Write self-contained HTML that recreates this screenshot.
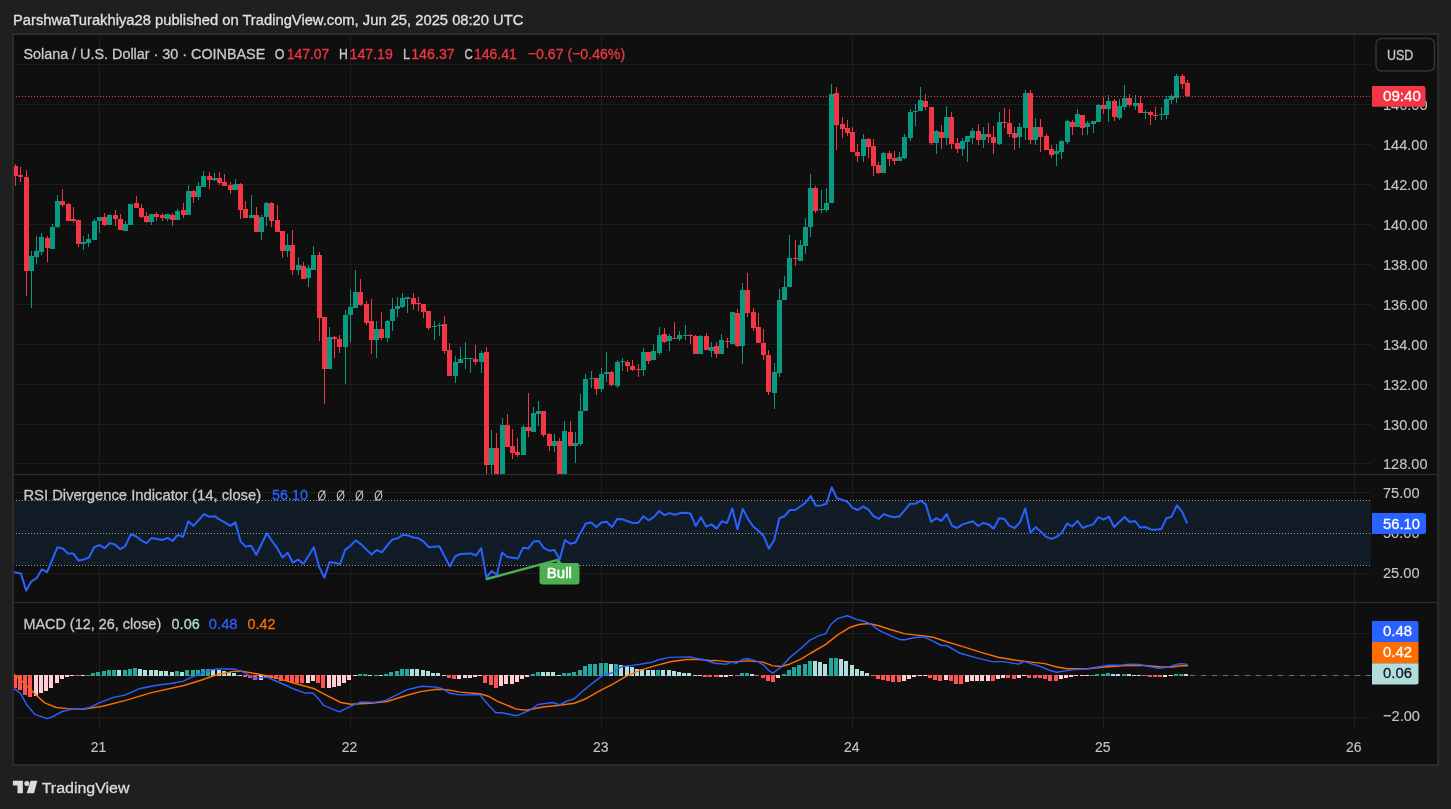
<!DOCTYPE html>
<html><head><meta charset="utf-8"><style>
svg{will-change:transform;}
html,body{margin:0;padding:0;width:1451px;height:809px;overflow:hidden;background:#1f1f1f;}
</style></head><body>
<svg width="1451" height="809" viewBox="0 0 1451 809" style="position:absolute;left:0;top:0;font-family:'Liberation Sans', sans-serif">
<defs>
<clipPath id="cp"><rect x="14" y="35" width="1357" height="439"/></clipPath>
<clipPath id="cr"><rect x="14" y="475" width="1357" height="127"/></clipPath>
<clipPath id="cm"><rect x="14" y="603" width="1357" height="126"/></clipPath>
</defs>
<rect x="0" y="0" width="1451" height="809" fill="#1f1f1f"/>
<rect x="12" y="33" width="1427" height="733" fill="#2b2b2b"/>
<rect x="14" y="35" width="1423" height="729" fill="#0f0f0f"/>
<line x1="99.5" y1="35" x2="99.5" y2="729" stroke="#1e1e1e" stroke-width="1"/>
<line x1="350.5" y1="35" x2="350.5" y2="729" stroke="#1e1e1e" stroke-width="1"/>
<line x1="601.5" y1="35" x2="601.5" y2="729" stroke="#1e1e1e" stroke-width="1"/>
<line x1="852.5" y1="35" x2="852.5" y2="729" stroke="#1e1e1e" stroke-width="1"/>
<line x1="1103.5" y1="35" x2="1103.5" y2="729" stroke="#1e1e1e" stroke-width="1"/>
<line x1="1354.5" y1="35" x2="1354.5" y2="729" stroke="#1e1e1e" stroke-width="1"/>
<line x1="14" y1="64.5" x2="1371" y2="64.5" stroke="#1e1e1e" stroke-width="1"/>
<line x1="14" y1="104.5" x2="1371" y2="104.5" stroke="#1e1e1e" stroke-width="1"/>
<line x1="14" y1="144.5" x2="1371" y2="144.5" stroke="#1e1e1e" stroke-width="1"/>
<line x1="14" y1="184.5" x2="1371" y2="184.5" stroke="#1e1e1e" stroke-width="1"/>
<line x1="14" y1="224.5" x2="1371" y2="224.5" stroke="#1e1e1e" stroke-width="1"/>
<line x1="14" y1="264.5" x2="1371" y2="264.5" stroke="#1e1e1e" stroke-width="1"/>
<line x1="14" y1="304.5" x2="1371" y2="304.5" stroke="#1e1e1e" stroke-width="1"/>
<line x1="14" y1="344.5" x2="1371" y2="344.5" stroke="#1e1e1e" stroke-width="1"/>
<line x1="14" y1="384.5" x2="1371" y2="384.5" stroke="#1e1e1e" stroke-width="1"/>
<line x1="14" y1="424.5" x2="1371" y2="424.5" stroke="#1e1e1e" stroke-width="1"/>
<line x1="14" y1="463.5" x2="1371" y2="463.5" stroke="#1e1e1e" stroke-width="1"/>
<line x1="14" y1="492.5" x2="1371" y2="492.5" stroke="#1e1e1e" stroke-width="1"/>
<line x1="14" y1="533.5" x2="1371" y2="533.5" stroke="#1e1e1e" stroke-width="1"/>
<line x1="14" y1="573.5" x2="1371" y2="573.5" stroke="#1e1e1e" stroke-width="1"/>
<line x1="14" y1="633.5" x2="1371" y2="633.5" stroke="#1e1e1e" stroke-width="1"/>
<line x1="14" y1="717.5" x2="1371" y2="717.5" stroke="#1e1e1e" stroke-width="1"/>
<line x1="14" y1="474.5" x2="1437" y2="474.5" stroke="#2e2e2e" stroke-width="1"/>
<line x1="14" y1="602.5" x2="1437" y2="602.5" stroke="#2e2e2e" stroke-width="1"/>
<g clip-path="url(#cp)" shape-rendering="crispEdges">
<rect x="15" y="164.0" width="1" height="21.7" fill="#f23645"/>
<rect x="13" y="165.9" width="5" height="9.9" fill="#f23645"/>
<rect x="20" y="167.0" width="1" height="14.7" fill="#f23645"/>
<rect x="18" y="175.4" width="5" height="1.2" fill="#f23645"/>
<rect x="26" y="169.9" width="1" height="126.5" fill="#f23645"/>
<rect x="24" y="176.8" width="5" height="93.9" fill="#f23645"/>
<rect x="31" y="250.9" width="1" height="57.3" fill="#089981"/>
<rect x="29" y="255.8" width="5" height="14.9" fill="#089981"/>
<rect x="36" y="236.0" width="1" height="27.8" fill="#089981"/>
<rect x="34" y="250.9" width="5" height="5.9" fill="#089981"/>
<rect x="41" y="233.0" width="1" height="21.9" fill="#089981"/>
<rect x="39" y="237.0" width="5" height="14.9" fill="#089981"/>
<rect x="47" y="236.0" width="1" height="25.8" fill="#f23645"/>
<rect x="45" y="238.0" width="5" height="10.0" fill="#f23645"/>
<rect x="52" y="224.2" width="1" height="24.7" fill="#089981"/>
<rect x="50" y="227.2" width="5" height="21.7" fill="#089981"/>
<rect x="57" y="195.2" width="1" height="33.0" fill="#089981"/>
<rect x="55" y="200.5" width="5" height="26.7" fill="#089981"/>
<rect x="62" y="189.2" width="1" height="17.8" fill="#f23645"/>
<rect x="60" y="201.1" width="5" height="3.9" fill="#f23645"/>
<rect x="68" y="203.0" width="1" height="17.9" fill="#f23645"/>
<rect x="66" y="203.9" width="5" height="17.0" fill="#f23645"/>
<rect x="73" y="207.0" width="1" height="15.8" fill="#f23645"/>
<rect x="71" y="219.3" width="5" height="2.0" fill="#f23645"/>
<rect x="78" y="219.9" width="1" height="27.1" fill="#f23645"/>
<rect x="76" y="219.9" width="5" height="24.1" fill="#f23645"/>
<rect x="83" y="236.0" width="1" height="14.0" fill="#089981"/>
<rect x="81" y="242.0" width="5" height="2.0" fill="#089981"/>
<rect x="88" y="234.0" width="1" height="13.0" fill="#089981"/>
<rect x="86" y="238.7" width="5" height="4.3" fill="#089981"/>
<rect x="94" y="219.3" width="1" height="20.7" fill="#089981"/>
<rect x="92" y="220.9" width="5" height="19.1" fill="#089981"/>
<rect x="99" y="217.3" width="1" height="15.7" fill="#089981"/>
<rect x="97" y="217.3" width="5" height="4.0" fill="#089981"/>
<rect x="104" y="213.0" width="1" height="13.2" fill="#f23645"/>
<rect x="102" y="217.3" width="5" height="7.9" fill="#f23645"/>
<rect x="109" y="213.8" width="1" height="11.0" fill="#089981"/>
<rect x="107" y="215.0" width="5" height="9.8" fill="#089981"/>
<rect x="115" y="209.8" width="1" height="16.4" fill="#f23645"/>
<rect x="113" y="215.3" width="5" height="4.0" fill="#f23645"/>
<rect x="120" y="213.8" width="1" height="15.8" fill="#f23645"/>
<rect x="118" y="218.9" width="5" height="10.7" fill="#f23645"/>
<rect x="125" y="220.9" width="1" height="9.9" fill="#089981"/>
<rect x="123" y="224.2" width="5" height="6.6" fill="#089981"/>
<rect x="130" y="203.9" width="1" height="20.9" fill="#089981"/>
<rect x="128" y="203.9" width="5" height="20.9" fill="#089981"/>
<rect x="136" y="196.0" width="1" height="12.4" fill="#f23645"/>
<rect x="134" y="203.0" width="5" height="5.4" fill="#f23645"/>
<rect x="141" y="203.9" width="1" height="14.4" fill="#f23645"/>
<rect x="139" y="207.8" width="5" height="9.5" fill="#f23645"/>
<rect x="146" y="211.8" width="1" height="11.0" fill="#f23645"/>
<rect x="144" y="216.3" width="5" height="6.0" fill="#f23645"/>
<rect x="151" y="213.8" width="1" height="11.0" fill="#089981"/>
<rect x="149" y="213.8" width="5" height="7.9" fill="#089981"/>
<rect x="156" y="212.4" width="1" height="8.5" fill="#f23645"/>
<rect x="154" y="213.8" width="5" height="3.1" fill="#f23645"/>
<rect x="162" y="213.0" width="1" height="7.9" fill="#f23645"/>
<rect x="160" y="215.0" width="5" height="2.7" fill="#f23645"/>
<rect x="167" y="213.8" width="1" height="7.1" fill="#089981"/>
<rect x="165" y="213.8" width="5" height="5.1" fill="#089981"/>
<rect x="172" y="213.0" width="1" height="12.6" fill="#f23645"/>
<rect x="170" y="215.3" width="5" height="4.4" fill="#f23645"/>
<rect x="177" y="209.0" width="1" height="10.7" fill="#089981"/>
<rect x="175" y="211.0" width="5" height="8.7" fill="#089981"/>
<rect x="183" y="203.0" width="1" height="14.7" fill="#f23645"/>
<rect x="181" y="210.4" width="5" height="4.6" fill="#f23645"/>
<rect x="188" y="185.3" width="1" height="29.7" fill="#089981"/>
<rect x="186" y="191.2" width="5" height="23.8" fill="#089981"/>
<rect x="193" y="190.0" width="1" height="12.5" fill="#f23645"/>
<rect x="191" y="191.2" width="5" height="6.0" fill="#f23645"/>
<rect x="198" y="182.1" width="1" height="17.4" fill="#089981"/>
<rect x="196" y="186.1" width="5" height="11.1" fill="#089981"/>
<rect x="203" y="170.9" width="1" height="15.8" fill="#089981"/>
<rect x="201" y="176.2" width="5" height="10.5" fill="#089981"/>
<rect x="209" y="172.3" width="1" height="16.4" fill="#f23645"/>
<rect x="207" y="176.2" width="5" height="3.6" fill="#f23645"/>
<rect x="214" y="173.4" width="1" height="7.4" fill="#089981"/>
<rect x="212" y="177.8" width="5" height="2.4" fill="#089981"/>
<rect x="219" y="172.3" width="1" height="12.4" fill="#f23645"/>
<rect x="217" y="178.2" width="5" height="4.5" fill="#f23645"/>
<rect x="224" y="174.2" width="1" height="11.9" fill="#f23645"/>
<rect x="222" y="182.1" width="5" height="3.6" fill="#f23645"/>
<rect x="230" y="182.1" width="1" height="11.5" fill="#f23645"/>
<rect x="228" y="185.3" width="5" height="4.3" fill="#f23645"/>
<rect x="235" y="179.4" width="1" height="10.2" fill="#089981"/>
<rect x="233" y="184.1" width="5" height="5.5" fill="#089981"/>
<rect x="240" y="183.3" width="1" height="35.6" fill="#f23645"/>
<rect x="238" y="184.1" width="5" height="25.9" fill="#f23645"/>
<rect x="245" y="200.6" width="1" height="17.8" fill="#f23645"/>
<rect x="243" y="209.1" width="5" height="8.7" fill="#f23645"/>
<rect x="251" y="195.3" width="1" height="22.5" fill="#089981"/>
<rect x="249" y="215.0" width="5" height="2.8" fill="#089981"/>
<rect x="256" y="207.2" width="1" height="24.5" fill="#f23645"/>
<rect x="254" y="215.0" width="5" height="16.7" fill="#f23645"/>
<rect x="261" y="215.0" width="1" height="24.6" fill="#089981"/>
<rect x="259" y="217.0" width="5" height="14.7" fill="#089981"/>
<rect x="266" y="201.6" width="1" height="24.1" fill="#089981"/>
<rect x="264" y="202.6" width="5" height="14.8" fill="#089981"/>
<rect x="271" y="201.6" width="1" height="25.3" fill="#f23645"/>
<rect x="269" y="202.6" width="5" height="18.4" fill="#f23645"/>
<rect x="277" y="205.2" width="1" height="26.5" fill="#f23645"/>
<rect x="275" y="219.8" width="5" height="11.9" fill="#f23645"/>
<rect x="282" y="231.3" width="1" height="26.7" fill="#f23645"/>
<rect x="280" y="231.3" width="5" height="19.3" fill="#f23645"/>
<rect x="287" y="233.6" width="1" height="23.4" fill="#089981"/>
<rect x="285" y="245.1" width="5" height="5.5" fill="#089981"/>
<rect x="292" y="229.7" width="1" height="45.0" fill="#f23645"/>
<rect x="290" y="245.1" width="5" height="24.7" fill="#f23645"/>
<rect x="298" y="257.0" width="1" height="17.7" fill="#089981"/>
<rect x="296" y="265.3" width="5" height="4.5" fill="#089981"/>
<rect x="303" y="261.9" width="1" height="16.8" fill="#f23645"/>
<rect x="301" y="265.8" width="5" height="12.9" fill="#f23645"/>
<rect x="308" y="264.5" width="1" height="22.1" fill="#089981"/>
<rect x="306" y="267.8" width="5" height="9.9" fill="#089981"/>
<rect x="313" y="246.0" width="1" height="23.8" fill="#089981"/>
<rect x="311" y="255.0" width="5" height="14.8" fill="#089981"/>
<rect x="319" y="252.4" width="1" height="88.6" fill="#f23645"/>
<rect x="317" y="255.0" width="5" height="62.6" fill="#f23645"/>
<rect x="324" y="317.2" width="1" height="86.6" fill="#f23645"/>
<rect x="322" y="317.2" width="5" height="51.4" fill="#f23645"/>
<rect x="329" y="327.0" width="1" height="41.6" fill="#089981"/>
<rect x="327" y="337.0" width="5" height="31.6" fill="#089981"/>
<rect x="334" y="336.0" width="1" height="21.7" fill="#f23645"/>
<rect x="332" y="337.0" width="5" height="2.3" fill="#f23645"/>
<rect x="339" y="335.0" width="1" height="17.8" fill="#f23645"/>
<rect x="337" y="339.0" width="5" height="7.8" fill="#f23645"/>
<rect x="345" y="310.3" width="1" height="73.7" fill="#089981"/>
<rect x="343" y="314.8" width="5" height="32.0" fill="#089981"/>
<rect x="350" y="290.0" width="1" height="51.9" fill="#089981"/>
<rect x="348" y="307.3" width="5" height="7.5" fill="#089981"/>
<rect x="355" y="269.8" width="1" height="37.9" fill="#089981"/>
<rect x="353" y="291.9" width="5" height="15.8" fill="#089981"/>
<rect x="360" y="279.2" width="1" height="27.1" fill="#f23645"/>
<rect x="358" y="291.9" width="5" height="13.1" fill="#f23645"/>
<rect x="366" y="301.0" width="1" height="23.7" fill="#f23645"/>
<rect x="364" y="303.8" width="5" height="19.3" fill="#f23645"/>
<rect x="371" y="299.0" width="1" height="54.8" fill="#f23645"/>
<rect x="369" y="320.8" width="5" height="19.2" fill="#f23645"/>
<rect x="376" y="321.0" width="1" height="37.3" fill="#089981"/>
<rect x="374" y="329.0" width="5" height="11.0" fill="#089981"/>
<rect x="381" y="312.3" width="1" height="27.7" fill="#f23645"/>
<rect x="379" y="329.0" width="5" height="9.0" fill="#f23645"/>
<rect x="387" y="320.0" width="1" height="21.9" fill="#089981"/>
<rect x="385" y="320.8" width="5" height="17.2" fill="#089981"/>
<rect x="392" y="297.8" width="1" height="32.8" fill="#089981"/>
<rect x="390" y="308.9" width="5" height="11.9" fill="#089981"/>
<rect x="397" y="297.0" width="1" height="19.8" fill="#089981"/>
<rect x="395" y="306.3" width="5" height="3.0" fill="#089981"/>
<rect x="402" y="293.0" width="1" height="14.7" fill="#089981"/>
<rect x="400" y="297.8" width="5" height="9.1" fill="#089981"/>
<rect x="407" y="297.0" width="1" height="15.8" fill="#089981"/>
<rect x="405" y="297.4" width="5" height="1.6" fill="#089981"/>
<rect x="413" y="293.0" width="1" height="16.7" fill="#f23645"/>
<rect x="411" y="297.8" width="5" height="6.0" fill="#f23645"/>
<rect x="418" y="297.4" width="1" height="13.5" fill="#f23645"/>
<rect x="416" y="302.7" width="5" height="1.0" fill="#f23645"/>
<rect x="423" y="304.2" width="1" height="14.1" fill="#f23645"/>
<rect x="421" y="304.2" width="5" height="7.4" fill="#f23645"/>
<rect x="428" y="310.9" width="1" height="19.1" fill="#f23645"/>
<rect x="426" y="310.9" width="5" height="17.3" fill="#f23645"/>
<rect x="434" y="320.8" width="1" height="19.0" fill="#089981"/>
<rect x="432" y="326.0" width="5" height="1.0" fill="#089981"/>
<rect x="439" y="322.5" width="1" height="13.1" fill="#089981"/>
<rect x="437" y="324.5" width="5" height="1.0" fill="#089981"/>
<rect x="444" y="315.8" width="1" height="38.4" fill="#f23645"/>
<rect x="442" y="324.0" width="5" height="26.5" fill="#f23645"/>
<rect x="449" y="343.0" width="1" height="33.4" fill="#f23645"/>
<rect x="447" y="349.7" width="5" height="26.7" fill="#f23645"/>
<rect x="455" y="356.1" width="1" height="26.5" fill="#089981"/>
<rect x="453" y="362.0" width="5" height="14.4" fill="#089981"/>
<rect x="460" y="346.7" width="1" height="16.1" fill="#089981"/>
<rect x="458" y="359.1" width="5" height="3.7" fill="#089981"/>
<rect x="465" y="341.8" width="1" height="26.7" fill="#089981"/>
<rect x="463" y="358.0" width="5" height="1.0" fill="#089981"/>
<rect x="470" y="357.9" width="1" height="14.8" fill="#089981"/>
<rect x="468" y="358.0" width="5" height="1.0" fill="#089981"/>
<rect x="475" y="344.8" width="1" height="19.7" fill="#f23645"/>
<rect x="473" y="358.6" width="5" height="3.4" fill="#f23645"/>
<rect x="481" y="351.2" width="1" height="21.5" fill="#089981"/>
<rect x="479" y="352.9" width="5" height="9.1" fill="#089981"/>
<rect x="486" y="346.7" width="1" height="133.3" fill="#f23645"/>
<rect x="484" y="352.2" width="5" height="112.8" fill="#f23645"/>
<rect x="491" y="430.0" width="1" height="50.0" fill="#089981"/>
<rect x="489" y="448.0" width="5" height="17.0" fill="#089981"/>
<rect x="496" y="433.2" width="1" height="46.8" fill="#f23645"/>
<rect x="494" y="448.0" width="5" height="32.0" fill="#f23645"/>
<rect x="502" y="418.0" width="1" height="62.0" fill="#089981"/>
<rect x="500" y="425.1" width="5" height="54.9" fill="#089981"/>
<rect x="507" y="414.0" width="1" height="33.0" fill="#f23645"/>
<rect x="505" y="425.1" width="5" height="21.9" fill="#f23645"/>
<rect x="512" y="429.2" width="1" height="29.7" fill="#f23645"/>
<rect x="510" y="446.1" width="5" height="6.9" fill="#f23645"/>
<rect x="517" y="437.8" width="1" height="19.1" fill="#f23645"/>
<rect x="515" y="452.3" width="5" height="2.5" fill="#f23645"/>
<rect x="523" y="425.1" width="1" height="29.7" fill="#089981"/>
<rect x="521" y="427.0" width="5" height="27.8" fill="#089981"/>
<rect x="528" y="393.0" width="1" height="43.9" fill="#f23645"/>
<rect x="526" y="427.0" width="5" height="3.9" fill="#f23645"/>
<rect x="533" y="407.0" width="1" height="25.0" fill="#089981"/>
<rect x="531" y="413.1" width="5" height="18.9" fill="#089981"/>
<rect x="538" y="401.0" width="1" height="25.0" fill="#089981"/>
<rect x="536" y="411.1" width="5" height="2.5" fill="#089981"/>
<rect x="543" y="411.1" width="1" height="25.8" fill="#f23645"/>
<rect x="541" y="411.1" width="5" height="23.9" fill="#f23645"/>
<rect x="549" y="433.2" width="1" height="17.8" fill="#f23645"/>
<rect x="547" y="434.1" width="5" height="11.7" fill="#f23645"/>
<rect x="554" y="434.1" width="1" height="17.9" fill="#089981"/>
<rect x="552" y="441.2" width="5" height="4.6" fill="#089981"/>
<rect x="559" y="438.1" width="1" height="41.9" fill="#f23645"/>
<rect x="557" y="440.8" width="5" height="39.2" fill="#f23645"/>
<rect x="564" y="421.0" width="1" height="59.0" fill="#089981"/>
<rect x="562" y="431.0" width="5" height="49.0" fill="#089981"/>
<rect x="570" y="421.0" width="1" height="24.8" fill="#f23645"/>
<rect x="568" y="432.0" width="5" height="13.8" fill="#f23645"/>
<rect x="575" y="432.0" width="1" height="30.8" fill="#089981"/>
<rect x="573" y="443.3" width="5" height="2.5" fill="#089981"/>
<rect x="580" y="394.2" width="1" height="51.9" fill="#089981"/>
<rect x="578" y="411.1" width="5" height="32.6" fill="#089981"/>
<rect x="585" y="374.3" width="1" height="36.9" fill="#089981"/>
<rect x="583" y="378.8" width="5" height="32.4" fill="#089981"/>
<rect x="591" y="371.3" width="1" height="16.8" fill="#089981"/>
<rect x="589" y="377.8" width="5" height="1.0" fill="#089981"/>
<rect x="596" y="378.2" width="1" height="16.4" fill="#f23645"/>
<rect x="594" y="378.2" width="5" height="10.5" fill="#f23645"/>
<rect x="601" y="367.8" width="1" height="23.7" fill="#089981"/>
<rect x="599" y="373.7" width="5" height="15.0" fill="#089981"/>
<rect x="606" y="352.0" width="1" height="30.2" fill="#089981"/>
<rect x="604" y="372.3" width="5" height="2.0" fill="#089981"/>
<rect x="611" y="371.3" width="1" height="14.2" fill="#f23645"/>
<rect x="609" y="371.7" width="5" height="13.1" fill="#f23645"/>
<rect x="617" y="359.8" width="1" height="27.7" fill="#089981"/>
<rect x="615" y="361.8" width="5" height="23.7" fill="#089981"/>
<rect x="622" y="357.9" width="1" height="13.0" fill="#089981"/>
<rect x="620" y="361.3" width="5" height="1.0" fill="#089981"/>
<rect x="627" y="360.4" width="1" height="11.3" fill="#f23645"/>
<rect x="625" y="361.8" width="5" height="4.6" fill="#f23645"/>
<rect x="632" y="360.4" width="1" height="10.5" fill="#f23645"/>
<rect x="630" y="366.4" width="5" height="3.3" fill="#f23645"/>
<rect x="638" y="364.4" width="1" height="12.4" fill="#f23645"/>
<rect x="636" y="369.0" width="5" height="1.0" fill="#f23645"/>
<rect x="643" y="348.0" width="1" height="27.7" fill="#089981"/>
<rect x="641" y="352.0" width="5" height="17.7" fill="#089981"/>
<rect x="648" y="351.9" width="1" height="11.9" fill="#f23645"/>
<rect x="646" y="351.9" width="5" height="8.9" fill="#f23645"/>
<rect x="653" y="344.0" width="1" height="15.8" fill="#089981"/>
<rect x="651" y="350.9" width="5" height="8.9" fill="#089981"/>
<rect x="659" y="326.8" width="1" height="28.1" fill="#089981"/>
<rect x="657" y="334.7" width="5" height="18.2" fill="#089981"/>
<rect x="664" y="328.2" width="1" height="14.8" fill="#f23645"/>
<rect x="662" y="334.1" width="5" height="7.9" fill="#f23645"/>
<rect x="669" y="334.1" width="1" height="16.8" fill="#089981"/>
<rect x="667" y="336.1" width="5" height="5.3" fill="#089981"/>
<rect x="674" y="322.3" width="1" height="16.4" fill="#f23645"/>
<rect x="672" y="337.5" width="5" height="1.0" fill="#f23645"/>
<rect x="679" y="330.8" width="1" height="10.6" fill="#089981"/>
<rect x="677" y="335.1" width="5" height="3.6" fill="#089981"/>
<rect x="685" y="324.8" width="1" height="15.2" fill="#089981"/>
<rect x="683" y="335.0" width="5" height="1.0" fill="#089981"/>
<rect x="690" y="334.1" width="1" height="9.9" fill="#f23645"/>
<rect x="688" y="334.6" width="5" height="1.0" fill="#f23645"/>
<rect x="695" y="335.1" width="1" height="18.8" fill="#f23645"/>
<rect x="693" y="336.1" width="5" height="17.8" fill="#f23645"/>
<rect x="700" y="334.7" width="1" height="19.2" fill="#089981"/>
<rect x="698" y="336.1" width="5" height="17.8" fill="#089981"/>
<rect x="706" y="333.1" width="1" height="16.8" fill="#f23645"/>
<rect x="704" y="336.1" width="5" height="13.8" fill="#f23645"/>
<rect x="711" y="342.0" width="1" height="14.8" fill="#089981"/>
<rect x="709" y="347.0" width="5" height="3.5" fill="#089981"/>
<rect x="716" y="342.0" width="1" height="15.8" fill="#f23645"/>
<rect x="714" y="346.0" width="5" height="7.9" fill="#f23645"/>
<rect x="721" y="334.1" width="1" height="19.8" fill="#089981"/>
<rect x="719" y="340.0" width="5" height="13.9" fill="#089981"/>
<rect x="727" y="338.0" width="1" height="10.0" fill="#f23645"/>
<rect x="725" y="341.0" width="5" height="1.0" fill="#f23645"/>
<rect x="732" y="311.8" width="1" height="32.2" fill="#089981"/>
<rect x="730" y="311.8" width="5" height="32.2" fill="#089981"/>
<rect x="737" y="309.0" width="1" height="38.0" fill="#f23645"/>
<rect x="735" y="313.0" width="5" height="33.0" fill="#f23645"/>
<rect x="742" y="283.3" width="1" height="80.5" fill="#089981"/>
<rect x="740" y="290.0" width="5" height="56.0" fill="#089981"/>
<rect x="747" y="272.8" width="1" height="44.5" fill="#f23645"/>
<rect x="745" y="290.0" width="5" height="23.0" fill="#f23645"/>
<rect x="753" y="307.8" width="1" height="23.0" fill="#f23645"/>
<rect x="751" y="311.8" width="5" height="16.4" fill="#f23645"/>
<rect x="758" y="312.5" width="1" height="30.5" fill="#f23645"/>
<rect x="756" y="327.0" width="5" height="16.0" fill="#f23645"/>
<rect x="763" y="329.3" width="1" height="30.4" fill="#f23645"/>
<rect x="761" y="342.5" width="5" height="12.0" fill="#f23645"/>
<rect x="768" y="349.7" width="1" height="45.3" fill="#f23645"/>
<rect x="766" y="354.5" width="5" height="37.2" fill="#f23645"/>
<rect x="774" y="362.9" width="1" height="46.1" fill="#089981"/>
<rect x="772" y="372.0" width="5" height="21.0" fill="#089981"/>
<rect x="779" y="289.4" width="1" height="87.6" fill="#089981"/>
<rect x="777" y="299.9" width="5" height="72.9" fill="#089981"/>
<rect x="784" y="276.1" width="1" height="23.8" fill="#089981"/>
<rect x="782" y="287.3" width="5" height="12.6" fill="#089981"/>
<rect x="789" y="235.4" width="1" height="51.2" fill="#089981"/>
<rect x="787" y="258.4" width="5" height="28.2" fill="#089981"/>
<rect x="795" y="240.0" width="1" height="25.5" fill="#f23645"/>
<rect x="793" y="258.4" width="5" height="1.0" fill="#f23645"/>
<rect x="800" y="239.6" width="1" height="21.2" fill="#089981"/>
<rect x="798" y="244.8" width="5" height="16.0" fill="#089981"/>
<rect x="805" y="218.0" width="1" height="35.7" fill="#089981"/>
<rect x="803" y="226.7" width="5" height="18.8" fill="#089981"/>
<rect x="810" y="173.9" width="1" height="62.9" fill="#089981"/>
<rect x="808" y="188.0" width="5" height="38.7" fill="#089981"/>
<rect x="815" y="185.6" width="1" height="27.0" fill="#f23645"/>
<rect x="813" y="188.0" width="5" height="23.0" fill="#f23645"/>
<rect x="821" y="189.9" width="1" height="22.7" fill="#089981"/>
<rect x="819" y="209.0" width="5" height="1.0" fill="#089981"/>
<rect x="826" y="188.0" width="1" height="23.5" fill="#089981"/>
<rect x="824" y="203.2" width="5" height="6.4" fill="#089981"/>
<rect x="831" y="83.5" width="1" height="119.7" fill="#089981"/>
<rect x="829" y="94.1" width="5" height="109.1" fill="#089981"/>
<rect x="836" y="87.0" width="1" height="63.0" fill="#f23645"/>
<rect x="834" y="92.9" width="5" height="31.7" fill="#f23645"/>
<rect x="842" y="117.0" width="1" height="20.5" fill="#f23645"/>
<rect x="840" y="124.1" width="5" height="4.7" fill="#f23645"/>
<rect x="847" y="120.4" width="1" height="15.9" fill="#f23645"/>
<rect x="845" y="128.1" width="5" height="4.7" fill="#f23645"/>
<rect x="852" y="127.0" width="1" height="24.6" fill="#f23645"/>
<rect x="850" y="132.1" width="5" height="19.5" fill="#f23645"/>
<rect x="857" y="143.8" width="1" height="17.9" fill="#f23645"/>
<rect x="855" y="151.6" width="5" height="4.0" fill="#f23645"/>
<rect x="863" y="134.0" width="1" height="27.7" fill="#089981"/>
<rect x="861" y="139.2" width="5" height="16.4" fill="#089981"/>
<rect x="868" y="138.2" width="1" height="19.8" fill="#f23645"/>
<rect x="866" y="139.2" width="5" height="7.7" fill="#f23645"/>
<rect x="873" y="138.9" width="1" height="36.6" fill="#f23645"/>
<rect x="871" y="145.7" width="5" height="20.1" fill="#f23645"/>
<rect x="878" y="162.0" width="1" height="11.9" fill="#f23645"/>
<rect x="876" y="164.7" width="5" height="8.1" fill="#f23645"/>
<rect x="883" y="151.8" width="1" height="21.0" fill="#089981"/>
<rect x="881" y="152.7" width="5" height="20.1" fill="#089981"/>
<rect x="889" y="151.1" width="1" height="14.7" fill="#f23645"/>
<rect x="887" y="153.1" width="5" height="5.5" fill="#f23645"/>
<rect x="894" y="150.8" width="1" height="14.1" fill="#f23645"/>
<rect x="892" y="158.2" width="5" height="2.7" fill="#f23645"/>
<rect x="899" y="152.2" width="1" height="8.7" fill="#089981"/>
<rect x="897" y="157.2" width="5" height="3.7" fill="#089981"/>
<rect x="904" y="134.1" width="1" height="24.9" fill="#089981"/>
<rect x="902" y="136.8" width="5" height="21.4" fill="#089981"/>
<rect x="910" y="109.0" width="1" height="31.9" fill="#089981"/>
<rect x="908" y="111.7" width="5" height="26.1" fill="#089981"/>
<rect x="915" y="103.8" width="1" height="22.2" fill="#089981"/>
<rect x="913" y="111.0" width="5" height="1.0" fill="#089981"/>
<rect x="920" y="87.0" width="1" height="24.4" fill="#089981"/>
<rect x="918" y="100.1" width="5" height="11.3" fill="#089981"/>
<rect x="925" y="94.0" width="1" height="16.0" fill="#f23645"/>
<rect x="923" y="101.1" width="5" height="6.2" fill="#f23645"/>
<rect x="931" y="106.9" width="1" height="38.1" fill="#f23645"/>
<rect x="929" y="106.9" width="5" height="36.0" fill="#f23645"/>
<rect x="936" y="130.0" width="1" height="23.8" fill="#089981"/>
<rect x="934" y="131.0" width="5" height="11.7" fill="#089981"/>
<rect x="941" y="125.0" width="1" height="24.0" fill="#f23645"/>
<rect x="939" y="132.1" width="5" height="5.7" fill="#f23645"/>
<rect x="946" y="106.0" width="1" height="39.0" fill="#089981"/>
<rect x="944" y="117.1" width="5" height="20.7" fill="#089981"/>
<rect x="951" y="112.0" width="1" height="37.0" fill="#f23645"/>
<rect x="949" y="117.1" width="5" height="26.9" fill="#f23645"/>
<rect x="957" y="138.2" width="1" height="14.5" fill="#f23645"/>
<rect x="955" y="142.9" width="5" height="6.1" fill="#f23645"/>
<rect x="962" y="138.2" width="1" height="17.6" fill="#089981"/>
<rect x="960" y="141.3" width="5" height="7.7" fill="#089981"/>
<rect x="967" y="136.1" width="1" height="25.9" fill="#089981"/>
<rect x="965" y="136.1" width="5" height="5.5" fill="#089981"/>
<rect x="972" y="128.0" width="1" height="15.6" fill="#089981"/>
<rect x="970" y="131.0" width="5" height="6.5" fill="#089981"/>
<rect x="978" y="123.9" width="1" height="21.1" fill="#f23645"/>
<rect x="976" y="131.0" width="5" height="9.0" fill="#f23645"/>
<rect x="983" y="126.9" width="1" height="20.8" fill="#089981"/>
<rect x="981" y="134.1" width="5" height="5.9" fill="#089981"/>
<rect x="988" y="122.8" width="1" height="20.2" fill="#f23645"/>
<rect x="986" y="134.1" width="5" height="2.9" fill="#f23645"/>
<rect x="993" y="126.0" width="1" height="27.8" fill="#f23645"/>
<rect x="991" y="136.8" width="5" height="6.1" fill="#f23645"/>
<rect x="999" y="112.0" width="1" height="33.0" fill="#089981"/>
<rect x="997" y="121.9" width="5" height="22.4" fill="#089981"/>
<rect x="1004" y="107.9" width="1" height="20.1" fill="#f23645"/>
<rect x="1002" y="122.0" width="5" height="1.0" fill="#f23645"/>
<rect x="1009" y="109.0" width="1" height="28.2" fill="#f23645"/>
<rect x="1007" y="122.8" width="5" height="10.9" fill="#f23645"/>
<rect x="1014" y="126.6" width="1" height="23.4" fill="#f23645"/>
<rect x="1012" y="133.2" width="5" height="4.6" fill="#f23645"/>
<rect x="1019" y="122.8" width="1" height="25.3" fill="#089981"/>
<rect x="1017" y="126.9" width="5" height="9.9" fill="#089981"/>
<rect x="1025" y="90.2" width="1" height="49.8" fill="#089981"/>
<rect x="1023" y="92.9" width="5" height="34.8" fill="#089981"/>
<rect x="1030" y="90.2" width="1" height="53.8" fill="#f23645"/>
<rect x="1028" y="92.9" width="5" height="47.1" fill="#f23645"/>
<rect x="1035" y="118.2" width="1" height="26.8" fill="#089981"/>
<rect x="1033" y="126.9" width="5" height="13.1" fill="#089981"/>
<rect x="1040" y="118.8" width="1" height="33.0" fill="#f23645"/>
<rect x="1038" y="126.9" width="5" height="9.9" fill="#f23645"/>
<rect x="1046" y="134.1" width="1" height="15.6" fill="#f23645"/>
<rect x="1044" y="136.1" width="5" height="13.6" fill="#f23645"/>
<rect x="1051" y="145.0" width="1" height="12.9" fill="#f23645"/>
<rect x="1049" y="149.0" width="5" height="5.9" fill="#f23645"/>
<rect x="1056" y="144.0" width="1" height="21.8" fill="#089981"/>
<rect x="1054" y="151.4" width="5" height="2.1" fill="#089981"/>
<rect x="1061" y="140.0" width="1" height="19.0" fill="#089981"/>
<rect x="1059" y="140.9" width="5" height="10.9" fill="#089981"/>
<rect x="1067" y="119.8" width="1" height="23.8" fill="#089981"/>
<rect x="1065" y="120.9" width="5" height="20.9" fill="#089981"/>
<rect x="1072" y="119.8" width="1" height="15.2" fill="#f23645"/>
<rect x="1070" y="121.9" width="5" height="5.0" fill="#f23645"/>
<rect x="1077" y="109.0" width="1" height="17.9" fill="#089981"/>
<rect x="1075" y="114.1" width="5" height="12.8" fill="#089981"/>
<rect x="1082" y="115.1" width="1" height="19.9" fill="#f23645"/>
<rect x="1080" y="115.1" width="5" height="12.6" fill="#f23645"/>
<rect x="1087" y="120.9" width="1" height="13.9" fill="#089981"/>
<rect x="1085" y="122.8" width="5" height="4.1" fill="#089981"/>
<rect x="1093" y="120.9" width="1" height="12.3" fill="#089981"/>
<rect x="1091" y="121.2" width="5" height="2.4" fill="#089981"/>
<rect x="1098" y="103.8" width="1" height="18.1" fill="#089981"/>
<rect x="1096" y="104.9" width="5" height="17.0" fill="#089981"/>
<rect x="1103" y="96.8" width="1" height="17.4" fill="#f23645"/>
<rect x="1101" y="105.0" width="5" height="4.0" fill="#f23645"/>
<rect x="1108" y="95.1" width="1" height="27.0" fill="#089981"/>
<rect x="1106" y="100.9" width="5" height="8.1" fill="#089981"/>
<rect x="1114" y="98.9" width="1" height="22.2" fill="#f23645"/>
<rect x="1112" y="100.9" width="5" height="16.2" fill="#f23645"/>
<rect x="1119" y="98.9" width="1" height="21.1" fill="#089981"/>
<rect x="1117" y="106.1" width="5" height="11.9" fill="#089981"/>
<rect x="1124" y="85.1" width="1" height="24.9" fill="#089981"/>
<rect x="1122" y="97.9" width="5" height="8.6" fill="#089981"/>
<rect x="1129" y="94.0" width="1" height="13.0" fill="#f23645"/>
<rect x="1127" y="97.9" width="5" height="7.1" fill="#f23645"/>
<rect x="1135" y="94.9" width="1" height="15.1" fill="#089981"/>
<rect x="1133" y="103.1" width="5" height="2.6" fill="#089981"/>
<rect x="1140" y="96.2" width="1" height="16.6" fill="#f23645"/>
<rect x="1138" y="103.1" width="5" height="9.7" fill="#f23645"/>
<rect x="1145" y="110.0" width="1" height="9.1" fill="#089981"/>
<rect x="1143" y="112.0" width="5" height="1.0" fill="#089981"/>
<rect x="1150" y="110.9" width="1" height="14.0" fill="#f23645"/>
<rect x="1148" y="111.7" width="5" height="3.1" fill="#f23645"/>
<rect x="1155" y="107.0" width="1" height="13.0" fill="#f23645"/>
<rect x="1153" y="115.0" width="5" height="1.0" fill="#f23645"/>
<rect x="1161" y="107.0" width="1" height="13.0" fill="#089981"/>
<rect x="1159" y="114.0" width="5" height="1.0" fill="#089981"/>
<rect x="1166" y="96.2" width="1" height="22.9" fill="#089981"/>
<rect x="1164" y="98.9" width="5" height="16.1" fill="#089981"/>
<rect x="1171" y="94.0" width="1" height="10.0" fill="#089981"/>
<rect x="1169" y="96.3" width="5" height="3.5" fill="#089981"/>
<rect x="1176" y="73.8" width="1" height="29.1" fill="#089981"/>
<rect x="1174" y="76.1" width="5" height="21.8" fill="#089981"/>
<rect x="1182" y="73.8" width="1" height="15.3" fill="#f23645"/>
<rect x="1180" y="76.1" width="5" height="7.8" fill="#f23645"/>
<rect x="1187" y="80.1" width="1" height="16.9" fill="#f23645"/>
<rect x="1185" y="83.0" width="5" height="13.0" fill="#f23645"/>
</g>
<line x1="14" y1="96.5" x2="1371" y2="96.5" stroke="#f23645" stroke-width="1" stroke-dasharray="1 2" stroke-dashoffset="1"/>
<rect x="14" y="500.5" width="1357" height="65" fill="#111c26"/>
<line x1="485.7" y1="579.2" x2="558.8" y2="559.6" stroke="#4caf50" stroke-width="2.5"/>
<rect x="539.5" y="563" width="40" height="21.5" rx="3" fill="#4caf50"/>
<path d="M555.6,563.5 L558.8,559.4 L562,563.5 Z" fill="#4caf50"/>
<text x="559.3" y="578" fill="#ffffff" stroke="#ffffff" stroke-width="0.5" font-size="14.5" text-anchor="middle" textLength="25" lengthAdjust="spacingAndGlyphs">Bull</text>
<line x1="14" y1="500.5" x2="1371" y2="500.5" stroke="#9a9a9a" stroke-width="1" stroke-dasharray="1 2" stroke-dashoffset="1"/>
<line x1="14" y1="533.5" x2="1371" y2="533.5" stroke="#9a9a9a" stroke-width="1" stroke-dasharray="1 2" stroke-dashoffset="1"/>
<line x1="14" y1="565.5" x2="1371" y2="565.5" stroke="#9a9a9a" stroke-width="1" stroke-dasharray="1 2" stroke-dashoffset="1"/>
<g clip-path="url(#cr)"><polyline points="13.1,572.0 20.9,573.4 26.2,590.6 31.4,581.3 36.6,578.2 41.9,569.3 47.1,572.0 57.5,547.2 62.8,548.6 68.0,553.4 73.2,553.4 78.5,560.6 83.7,559.6 88.9,557.5 94.2,547.2 99.4,545.1 104.6,548.2 109.8,543.1 115.1,544.5 120.3,549.3 125.5,545.7 130.8,534.2 136.0,536.2 141.2,540.4 146.5,543.1 151.7,537.9 156.9,538.9 162.2,540.0 167.4,537.9 172.6,541.0 177.8,534.8 183.1,536.9 188.3,521.3 193.5,525.9 204.0,514.1 209.2,516.8 214.5,516.2 219.7,519.7 224.9,522.4 230.2,525.9 235.4,522.4 240.6,541.6 245.8,546.6 251.1,545.7 256.3,554.8 266.8,533.3 272.0,541.0 277.2,548.2 282.5,557.5 287.7,552.8 292.9,562.7 298.1,559.6 303.4,563.7 308.6,555.7 313.8,547.2 319.1,566.8 324.3,577.6 329.5,562.3 334.8,562.7 340.0,564.3 345.2,549.9 350.5,545.7 355.7,540.4 360.9,544.1 366.1,549.3 371.4,554.4 376.6,549.9 381.8,552.4 387.1,545.7 392.3,539.5 397.5,538.3 402.8,534.8 408.0,535.4 413.2,537.5 418.4,538.3 423.7,541.6 428.9,547.2 439.4,546.2 449.8,566.4 455.1,556.5 460.3,554.0 470.8,553.4 476.0,555.5 481.2,548.2 486.4,577.6 491.7,571.0 496.9,574.7 502.1,552.4 507.4,556.9 517.8,558.6 523.1,547.8 528.3,548.6 533.5,541.6 538.8,541.0 544.0,548.2 549.2,550.7 554.4,549.9 559.7,559.6 564.9,540.0 570.1,543.7 575.4,542.6 580.6,532.7 585.8,523.4 591.1,522.4 596.3,527.1 601.5,522.4 606.7,521.8 612.0,527.1 617.2,518.9 622.4,519.3 627.7,521.3 632.9,523.0 638.1,523.0 643.4,516.2 648.6,520.3 653.8,517.2 659.1,511.0 664.3,515.1 669.5,513.1 674.7,514.7 680.0,513.1 685.2,512.7 690.4,513.5 695.7,525.9 700.9,517.2 706.1,526.5 711.4,524.4 716.6,528.6 721.8,521.3 727.0,523.0 732.3,508.5 737.5,529.2 742.7,508.9 748.0,518.9 753.2,526.5 758.4,530.7 763.7,536.2 768.9,548.6 774.1,540.4 779.4,518.2 784.6,516.2 789.8,510.0 795.0,510.0 800.3,506.5 805.5,502.7 810.7,496.1 816.0,505.8 821.2,505.4 826.4,503.8 831.7,487.2 836.9,498.2 842.1,499.6 847.3,501.7 852.6,507.9 857.8,510.0 863.0,506.5 868.3,509.4 873.5,516.2 878.7,518.9 884.0,514.1 889.2,516.2 894.4,517.2 899.7,516.2 910.1,503.8 915.3,503.8 920.6,500.7 925.8,504.4 931.0,521.8 936.3,518.2 941.5,520.9 946.7,514.1 952.0,525.9 957.2,528.0 962.4,524.4 972.9,521.3 978.1,525.9 983.3,523.0 988.6,524.4 993.8,528.6 999.0,518.2 1004.3,518.9 1009.5,525.9 1014.7,528.0 1020.0,522.4 1025.2,508.5 1030.4,532.7 1035.6,527.1 1040.9,531.7 1046.1,536.9 1051.3,538.9 1056.6,536.9 1061.8,532.7 1067.0,523.4 1072.3,526.5 1077.5,520.9 1082.7,528.0 1088.0,525.9 1093.2,524.4 1098.4,517.2 1103.6,519.7 1108.9,516.7 1114.1,527.0 1119.3,522.0 1124.6,517.0 1129.8,521.9 1135.0,521.1 1140.3,527.6 1145.5,527.0 1150.7,529.4 1155.9,529.8 1161.2,529.1 1166.4,518.3 1171.6,516.7 1176.9,505.3 1182.1,512.0 1187.3,523.4" fill="none" stroke="#2962ff" stroke-width="2" stroke-linejoin="round"/></g>
<line x1="14" y1="675.5" x2="1371" y2="675.5" stroke="#1e1e1e" stroke-width="1"/>
<line x1="14" y1="675.5" x2="1371" y2="675.5" stroke="#6c6f78" stroke-width="1" stroke-dasharray="5 6" stroke-dashoffset="1"/>
<g clip-path="url(#cm)" shape-rendering="crispEdges">
<rect x="13" y="675" width="4" height="13" fill="#ff5252"/>
<rect x="18" y="675" width="4" height="15" fill="#ff5252"/>
<rect x="23" y="675" width="4" height="20" fill="#ff5252"/>
<rect x="28" y="675" width="4" height="22" fill="#ff5252"/>
<rect x="34" y="675" width="4" height="21" fill="#ffcdd2"/>
<rect x="39" y="675" width="4" height="18" fill="#ffcdd2"/>
<rect x="44" y="675" width="4" height="16" fill="#ffcdd2"/>
<rect x="49" y="675" width="4" height="13" fill="#ffcdd2"/>
<rect x="55" y="675" width="4" height="8" fill="#ffcdd2"/>
<rect x="60" y="675" width="4" height="4" fill="#ffcdd2"/>
<rect x="65" y="675" width="4" height="2" fill="#ffcdd2"/>
<rect x="70" y="675" width="4" height="1" fill="#ffcdd2"/>
<rect x="75" y="675" width="4" height="1" fill="#ff5252"/>
<rect x="81" y="675" width="4" height="1" fill="#ffcdd2"/>
<rect x="86" y="675" width="4" height="1" fill="#26a69a"/>
<rect x="91" y="673" width="4" height="3" fill="#26a69a"/>
<rect x="96" y="672" width="4" height="4" fill="#26a69a"/>
<rect x="102" y="671" width="4" height="5" fill="#26a69a"/>
<rect x="107" y="670" width="4" height="6" fill="#26a69a"/>
<rect x="112" y="670" width="4" height="6" fill="#26a69a"/>
<rect x="117" y="670" width="4" height="6" fill="#b2dfdb"/>
<rect x="123" y="670" width="4" height="6" fill="#26a69a"/>
<rect x="128" y="669" width="4" height="7" fill="#26a69a"/>
<rect x="133" y="668" width="4" height="8" fill="#26a69a"/>
<rect x="138" y="669" width="4" height="7" fill="#b2dfdb"/>
<rect x="143" y="670" width="4" height="6" fill="#b2dfdb"/>
<rect x="149" y="670" width="4" height="6" fill="#b2dfdb"/>
<rect x="154" y="670" width="4" height="6" fill="#b2dfdb"/>
<rect x="159" y="671" width="4" height="5" fill="#b2dfdb"/>
<rect x="164" y="671" width="4" height="5" fill="#b2dfdb"/>
<rect x="170" y="672" width="4" height="4" fill="#b2dfdb"/>
<rect x="175" y="671" width="4" height="5" fill="#26a69a"/>
<rect x="180" y="672" width="4" height="4" fill="#b2dfdb"/>
<rect x="185" y="670" width="4" height="6" fill="#26a69a"/>
<rect x="191" y="670" width="4" height="6" fill="#26a69a"/>
<rect x="196" y="670" width="4" height="6" fill="#26a69a"/>
<rect x="201" y="669" width="4" height="7" fill="#26a69a"/>
<rect x="206" y="669" width="4" height="7" fill="#26a69a"/>
<rect x="211" y="669" width="4" height="7" fill="#b2dfdb"/>
<rect x="217" y="670" width="4" height="6" fill="#b2dfdb"/>
<rect x="222" y="671" width="4" height="5" fill="#b2dfdb"/>
<rect x="227" y="672" width="4" height="4" fill="#b2dfdb"/>
<rect x="232" y="673" width="4" height="3" fill="#b2dfdb"/>
<rect x="238" y="675" width="4" height="1" fill="#b2dfdb"/>
<rect x="243" y="675" width="4" height="2" fill="#ff5252"/>
<rect x="248" y="675" width="4" height="3" fill="#ff5252"/>
<rect x="253" y="675" width="4" height="5" fill="#ff5252"/>
<rect x="259" y="675" width="4" height="5" fill="#ffcdd2"/>
<rect x="264" y="675" width="4" height="2" fill="#ffcdd2"/>
<rect x="269" y="675" width="4" height="3" fill="#ff5252"/>
<rect x="274" y="675" width="4" height="4" fill="#ff5252"/>
<rect x="279" y="675" width="4" height="6" fill="#ff5252"/>
<rect x="285" y="675" width="4" height="6" fill="#ff5252"/>
<rect x="290" y="675" width="4" height="8" fill="#ff5252"/>
<rect x="295" y="675" width="4" height="8" fill="#ff5252"/>
<rect x="300" y="675" width="4" height="8" fill="#ff5252"/>
<rect x="306" y="675" width="4" height="8" fill="#ffcdd2"/>
<rect x="311" y="675" width="4" height="6" fill="#ffcdd2"/>
<rect x="316" y="675" width="4" height="8" fill="#ff5252"/>
<rect x="321" y="675" width="4" height="13" fill="#ff5252"/>
<rect x="327" y="675" width="4" height="13" fill="#ffcdd2"/>
<rect x="332" y="675" width="4" height="12" fill="#ffcdd2"/>
<rect x="337" y="675" width="4" height="11" fill="#ffcdd2"/>
<rect x="342" y="675" width="4" height="8" fill="#ffcdd2"/>
<rect x="347" y="675" width="4" height="5" fill="#ffcdd2"/>
<rect x="353" y="675" width="4" height="1" fill="#ffcdd2"/>
<rect x="358" y="674" width="4" height="2" fill="#26a69a"/>
<rect x="363" y="674" width="4" height="2" fill="#26a69a"/>
<rect x="368" y="675" width="4" height="1" fill="#b2dfdb"/>
<rect x="374" y="675" width="4" height="1" fill="#26a69a"/>
<rect x="379" y="675" width="4" height="1" fill="#b2dfdb"/>
<rect x="384" y="674" width="4" height="2" fill="#26a69a"/>
<rect x="389" y="672" width="4" height="4" fill="#26a69a"/>
<rect x="395" y="671" width="4" height="5" fill="#26a69a"/>
<rect x="400" y="669" width="4" height="7" fill="#26a69a"/>
<rect x="405" y="669" width="4" height="7" fill="#26a69a"/>
<rect x="410" y="669" width="4" height="7" fill="#b2dfdb"/>
<rect x="415" y="669" width="4" height="7" fill="#b2dfdb"/>
<rect x="421" y="670" width="4" height="6" fill="#b2dfdb"/>
<rect x="426" y="671" width="4" height="5" fill="#b2dfdb"/>
<rect x="431" y="673" width="4" height="3" fill="#b2dfdb"/>
<rect x="436" y="673" width="4" height="3" fill="#b2dfdb"/>
<rect x="442" y="675" width="4" height="1" fill="#b2dfdb"/>
<rect x="447" y="675" width="4" height="3" fill="#ff5252"/>
<rect x="452" y="675" width="4" height="4" fill="#ff5252"/>
<rect x="457" y="675" width="4" height="4" fill="#ffcdd2"/>
<rect x="463" y="675" width="4" height="3" fill="#ffcdd2"/>
<rect x="468" y="675" width="4" height="3" fill="#ffcdd2"/>
<rect x="473" y="675" width="4" height="2" fill="#ffcdd2"/>
<rect x="478" y="675" width="4" height="1" fill="#ffcdd2"/>
<rect x="483" y="675" width="4" height="8" fill="#ff5252"/>
<rect x="489" y="675" width="4" height="10" fill="#ff5252"/>
<rect x="494" y="675" width="4" height="13" fill="#ff5252"/>
<rect x="499" y="675" width="4" height="11" fill="#ffcdd2"/>
<rect x="504" y="675" width="4" height="9" fill="#ffcdd2"/>
<rect x="510" y="675" width="4" height="9" fill="#ffcdd2"/>
<rect x="515" y="675" width="4" height="7" fill="#ffcdd2"/>
<rect x="520" y="675" width="4" height="4" fill="#ffcdd2"/>
<rect x="525" y="675" width="4" height="2" fill="#ffcdd2"/>
<rect x="531" y="674" width="4" height="2" fill="#26a69a"/>
<rect x="536" y="672" width="4" height="4" fill="#26a69a"/>
<rect x="541" y="672" width="4" height="4" fill="#b2dfdb"/>
<rect x="546" y="672" width="4" height="4" fill="#b2dfdb"/>
<rect x="551" y="672" width="4" height="4" fill="#b2dfdb"/>
<rect x="557" y="675" width="4" height="1" fill="#b2dfdb"/>
<rect x="562" y="673" width="4" height="3" fill="#26a69a"/>
<rect x="567" y="673" width="4" height="3" fill="#26a69a"/>
<rect x="572" y="672" width="4" height="4" fill="#26a69a"/>
<rect x="578" y="670" width="4" height="6" fill="#26a69a"/>
<rect x="583" y="666" width="4" height="10" fill="#26a69a"/>
<rect x="588" y="664" width="4" height="12" fill="#26a69a"/>
<rect x="593" y="664" width="4" height="12" fill="#26a69a"/>
<rect x="599" y="663" width="4" height="13" fill="#26a69a"/>
<rect x="604" y="663" width="4" height="13" fill="#26a69a"/>
<rect x="609" y="664" width="4" height="12" fill="#b2dfdb"/>
<rect x="614" y="664" width="4" height="12" fill="#26a69a"/>
<rect x="619" y="665" width="4" height="11" fill="#b2dfdb"/>
<rect x="625" y="666" width="4" height="10" fill="#b2dfdb"/>
<rect x="630" y="667" width="4" height="9" fill="#b2dfdb"/>
<rect x="635" y="669" width="4" height="7" fill="#b2dfdb"/>
<rect x="640" y="669" width="4" height="7" fill="#b2dfdb"/>
<rect x="646" y="670" width="4" height="6" fill="#b2dfdb"/>
<rect x="651" y="670" width="4" height="6" fill="#b2dfdb"/>
<rect x="656" y="670" width="4" height="6" fill="#26a69a"/>
<rect x="661" y="670" width="4" height="6" fill="#b2dfdb"/>
<rect x="667" y="670" width="4" height="6" fill="#b2dfdb"/>
<rect x="672" y="671" width="4" height="5" fill="#b2dfdb"/>
<rect x="677" y="672" width="4" height="4" fill="#b2dfdb"/>
<rect x="682" y="673" width="4" height="3" fill="#b2dfdb"/>
<rect x="687" y="673" width="4" height="3" fill="#b2dfdb"/>
<rect x="693" y="675" width="4" height="1" fill="#b2dfdb"/>
<rect x="698" y="675" width="4" height="1" fill="#b2dfdb"/>
<rect x="703" y="675" width="4" height="2" fill="#ff5252"/>
<rect x="708" y="675" width="4" height="2" fill="#ff5252"/>
<rect x="714" y="675" width="4" height="2" fill="#ff5252"/>
<rect x="719" y="675" width="4" height="2" fill="#ffcdd2"/>
<rect x="724" y="675" width="4" height="2" fill="#ffcdd2"/>
<rect x="729" y="675" width="4" height="1" fill="#ffcdd2"/>
<rect x="735" y="675" width="4" height="1" fill="#ff5252"/>
<rect x="740" y="673" width="4" height="3" fill="#26a69a"/>
<rect x="745" y="673" width="4" height="3" fill="#26a69a"/>
<rect x="750" y="674" width="4" height="2" fill="#b2dfdb"/>
<rect x="755" y="675" width="4" height="1" fill="#ff5252"/>
<rect x="761" y="675" width="4" height="3" fill="#ff5252"/>
<rect x="766" y="675" width="4" height="6" fill="#ff5252"/>
<rect x="771" y="675" width="4" height="7" fill="#ff5252"/>
<rect x="776" y="675" width="4" height="3" fill="#ffcdd2"/>
<rect x="782" y="674" width="4" height="2" fill="#26a69a"/>
<rect x="787" y="670" width="4" height="6" fill="#26a69a"/>
<rect x="792" y="667" width="4" height="9" fill="#26a69a"/>
<rect x="797" y="665" width="4" height="11" fill="#26a69a"/>
<rect x="803" y="664" width="4" height="12" fill="#26a69a"/>
<rect x="808" y="661" width="4" height="15" fill="#26a69a"/>
<rect x="813" y="661" width="4" height="15" fill="#b2dfdb"/>
<rect x="818" y="662" width="4" height="14" fill="#b2dfdb"/>
<rect x="823" y="664" width="4" height="12" fill="#b2dfdb"/>
<rect x="829" y="658" width="4" height="18" fill="#26a69a"/>
<rect x="834" y="658" width="4" height="18" fill="#26a69a"/>
<rect x="839" y="659" width="4" height="17" fill="#b2dfdb"/>
<rect x="844" y="661" width="4" height="15" fill="#b2dfdb"/>
<rect x="850" y="665" width="4" height="11" fill="#b2dfdb"/>
<rect x="855" y="669" width="4" height="7" fill="#b2dfdb"/>
<rect x="860" y="671" width="4" height="5" fill="#b2dfdb"/>
<rect x="865" y="673" width="4" height="3" fill="#b2dfdb"/>
<rect x="871" y="675" width="4" height="1" fill="#ff5252"/>
<rect x="876" y="675" width="4" height="4" fill="#ff5252"/>
<rect x="881" y="675" width="4" height="5" fill="#ff5252"/>
<rect x="886" y="675" width="4" height="6" fill="#ff5252"/>
<rect x="891" y="675" width="4" height="7" fill="#ff5252"/>
<rect x="897" y="675" width="4" height="7" fill="#ff5252"/>
<rect x="902" y="675" width="4" height="6" fill="#ffcdd2"/>
<rect x="907" y="675" width="4" height="4" fill="#ffcdd2"/>
<rect x="912" y="675" width="4" height="2" fill="#ffcdd2"/>
<rect x="918" y="675" width="4" height="1" fill="#ffcdd2"/>
<rect x="923" y="675" width="4" height="1" fill="#ffcdd2"/>
<rect x="928" y="675" width="4" height="3" fill="#ff5252"/>
<rect x="933" y="675" width="4" height="5" fill="#ff5252"/>
<rect x="938" y="675" width="4" height="6" fill="#ff5252"/>
<rect x="944" y="675" width="4" height="5" fill="#ffcdd2"/>
<rect x="949" y="675" width="4" height="6" fill="#ff5252"/>
<rect x="954" y="675" width="4" height="9" fill="#ff5252"/>
<rect x="959" y="675" width="4" height="9" fill="#ff5252"/>
<rect x="965" y="675" width="4" height="7" fill="#ffcdd2"/>
<rect x="970" y="675" width="4" height="6" fill="#ffcdd2"/>
<rect x="975" y="675" width="4" height="6" fill="#ffcdd2"/>
<rect x="980" y="675" width="4" height="6" fill="#ffcdd2"/>
<rect x="986" y="675" width="4" height="6" fill="#ffcdd2"/>
<rect x="991" y="675" width="4" height="6" fill="#ff5252"/>
<rect x="996" y="675" width="4" height="4" fill="#ffcdd2"/>
<rect x="1001" y="675" width="4" height="3" fill="#ffcdd2"/>
<rect x="1006" y="675" width="4" height="3" fill="#ff5252"/>
<rect x="1012" y="675" width="4" height="4" fill="#ff5252"/>
<rect x="1017" y="675" width="4" height="3" fill="#ffcdd2"/>
<rect x="1022" y="675" width="4" height="1" fill="#ffcdd2"/>
<rect x="1027" y="675" width="4" height="3" fill="#ff5252"/>
<rect x="1033" y="675" width="4" height="3" fill="#ff5252"/>
<rect x="1038" y="675" width="4" height="3" fill="#ff5252"/>
<rect x="1043" y="675" width="4" height="4" fill="#ff5252"/>
<rect x="1048" y="675" width="4" height="6" fill="#ff5252"/>
<rect x="1054" y="675" width="4" height="6" fill="#ff5252"/>
<rect x="1059" y="675" width="4" height="4" fill="#ffcdd2"/>
<rect x="1064" y="675" width="4" height="3" fill="#ffcdd2"/>
<rect x="1069" y="675" width="4" height="2" fill="#ffcdd2"/>
<rect x="1074" y="675" width="4" height="1" fill="#ffcdd2"/>
<rect x="1080" y="675" width="4" height="1" fill="#ffcdd2"/>
<rect x="1085" y="675" width="4" height="1" fill="#ffcdd2"/>
<rect x="1090" y="675" width="4" height="1" fill="#26a69a"/>
<rect x="1095" y="674" width="4" height="2" fill="#26a69a"/>
<rect x="1101" y="674" width="4" height="2" fill="#26a69a"/>
<rect x="1106" y="673" width="4" height="3" fill="#26a69a"/>
<rect x="1111" y="674" width="4" height="2" fill="#b2dfdb"/>
<rect x="1116" y="674" width="4" height="2" fill="#b2dfdb"/>
<rect x="1122" y="674" width="4" height="2" fill="#26a69a"/>
<rect x="1127" y="674" width="4" height="2" fill="#b2dfdb"/>
<rect x="1132" y="675" width="4" height="1" fill="#b2dfdb"/>
<rect x="1137" y="675" width="4" height="1" fill="#b2dfdb"/>
<rect x="1142" y="675" width="4" height="1" fill="#ff5252"/>
<rect x="1148" y="675" width="4" height="2" fill="#ff5252"/>
<rect x="1153" y="675" width="4" height="2" fill="#ff5252"/>
<rect x="1158" y="675" width="4" height="2" fill="#ff5252"/>
<rect x="1163" y="675" width="4" height="2" fill="#ffcdd2"/>
<rect x="1169" y="675" width="4" height="1" fill="#ffcdd2"/>
<rect x="1174" y="674" width="4" height="2" fill="#26a69a"/>
<rect x="1179" y="674" width="4" height="2" fill="#26a69a"/>
<rect x="1184" y="674" width="4" height="2" fill="#b2dfdb"/>
</g>
<g clip-path="url(#cm)"><polyline points="13.3,673.9 23.2,682.2 34.8,693.8 44.7,702.9 56.3,707.5 67.9,708.6 84.4,709.1 102.6,706.2 125.8,700.4 150.6,692.9 183.7,685.5 200.2,680.5 216.8,674.7 233.3,671.4 241.6,671.1 261.5,674.7 278.1,678.4 294.6,683.3 314.5,688.8 327.7,695.9 340.9,702.5 350.9,704.2 370.7,703.2 387.2,701.5 403.8,696.2 420.3,691.6 436.9,689.3 446.8,689.6 460.0,692.1 479.9,693.8 488.3,696.2 496.5,700.9 516.4,709.1 526.3,710.3 542.9,707.0 559.4,705.3 574.3,703.2 585.9,698.7 602.4,689.3 612.3,684.3 625.6,676.7 638.8,670.6 653.7,666.1 670.2,661.8 686.7,659.5 700.0,659.5 711.6,660.7 715.0,660.4 731.5,662.1 748.1,660.9 763.0,662.1 772.9,665.9 781.2,666.5 789.4,664.2 801.0,659.2 810.9,653.0 825.8,644.4 837.4,635.1 849.0,627.8 858.9,624.5 868.8,623.5 878.7,625.7 890.3,629.5 905.2,633.9 921.7,635.6 933.3,637.3 946.6,641.7 963.8,646.9 981.0,652.4 998.2,657.2 1015.5,660.2 1029.3,661.9 1044.8,663.6 1056.8,667.0 1067.2,668.8 1087.8,668.8 1105.1,667.0 1122.3,665.8 1136.1,665.3 1148.1,665.8 1161.9,667.0 1172.3,667.0 1180.9,665.8 1187.8,665.8" fill="none" stroke="#ff6d00" stroke-width="1.45" stroke-linejoin="round"/>
<polyline points="13.3,688.0 20.8,693.8 26.5,704.5 34.8,714.4 47.2,718.6 51.3,717.4 62.1,711.5 72.8,709.1 81.1,709.1 88.6,707.8 99.3,702.9 114.2,697.1 124.1,695.4 139.0,688.8 155.5,685.5 172.1,683.3 182.8,681.4 191.9,677.2 208.5,670.6 216.8,668.9 234.1,668.9 241.6,671.4 245.0,673.1 254.9,678.4 266.5,677.2 274.8,680.5 286.3,685.5 294.6,689.3 304.5,692.9 312.8,692.9 317.8,697.9 323.6,705.3 339.3,711.9 350.9,706.2 360.8,702.0 374.0,702.5 385.6,700.4 397.2,694.6 407.1,689.6 422.0,686.3 436.9,687.1 443.5,689.3 450.1,693.3 460.0,694.9 479.9,694.6 485.8,702.0 495.7,712.8 501.5,712.8 516.4,715.8 529.6,710.3 537.9,704.5 552.8,702.5 559.4,704.8 566.0,701.5 574.3,698.7 582.5,691.3 592.5,683.3 602.4,675.6 612.3,672.7 622.2,666.5 630.5,665.6 638.8,664.5 652.0,662.3 658.6,659.8 670.2,657.4 690.1,656.9 695.0,658.2 703.3,659.5 714.9,663.2 726.6,664.2 731.5,662.1 736.5,663.2 743.1,659.2 748.1,658.8 758.0,661.6 764.6,665.9 769.6,671.2 772.9,673.1 781.2,667.0 789.4,657.9 801.0,648.3 810.1,640.1 819.2,635.6 825.5,633.9 830.8,624.5 837.4,618.6 847.3,615.8 857.2,619.6 863.9,621.2 870.5,624.0 878.7,630.1 890.3,635.6 900.2,639.7 905.2,639.7 913.5,637.7 923.4,636.8 930.0,639.7 941.6,645.5 946.6,645.5 960.3,653.3 975.8,657.6 993.1,661.9 1001.7,661.4 1015.5,663.6 1018.9,664.1 1024.1,661.4 1031.0,663.6 1039.6,666.2 1049.9,670.5 1056.8,672.2 1062.0,671.4 1074.1,669.6 1087.8,668.8 1098.2,667.0 1108.5,665.3 1120.6,665.3 1129.2,664.1 1139.5,664.5 1148.1,666.2 1158.5,668.3 1168.8,667.0 1177.4,664.1 1181.7,663.6 1187.8,664.5" fill="none" stroke="#2962ff" stroke-width="1.45" stroke-linejoin="round"/></g>
<text x="13" y="25" fill="#e0e0e0" stroke="#e0e0e0" stroke-width="0.3" font-size="15.5" textLength="510.4" lengthAdjust="spacingAndGlyphs">ParshwaTurakhiya28 published on TradingView.com, Jun 25, 2025 08:20 UTC</text>
<text x="23.4" y="59.2" fill="#c9c9c9" stroke="#c9c9c9" stroke-width="0.3" font-size="15.5" textLength="241.9" lengthAdjust="spacingAndGlyphs">Solana / U.S. Dollar · 30 · COINBASE</text>
<text x="274.8" y="59.2" fill="#c9c9c9" stroke="#c9c9c9" stroke-width="0.3" font-size="15.5" textLength="9.7" lengthAdjust="spacingAndGlyphs">O</text>
<text x="286.7" y="59.2" fill="#f23645" stroke="#f23645" stroke-width="0.3" font-size="15.5" textLength="42.6" lengthAdjust="spacingAndGlyphs">147.07</text>
<text x="339.1" y="59.2" fill="#c9c9c9" stroke="#c9c9c9" stroke-width="0.3" font-size="15.5" textLength="8.8" lengthAdjust="spacingAndGlyphs">H</text>
<text x="349.6" y="59.2" fill="#f23645" stroke="#f23645" stroke-width="0.3" font-size="15.5" textLength="43.2" lengthAdjust="spacingAndGlyphs">147.19</text>
<text x="402.9" y="59.2" fill="#c9c9c9" stroke="#c9c9c9" stroke-width="0.3" font-size="15.5" textLength="7.2" lengthAdjust="spacingAndGlyphs">L</text>
<text x="411.2" y="59.2" fill="#f23645" stroke="#f23645" stroke-width="0.3" font-size="15.5" textLength="43.6" lengthAdjust="spacingAndGlyphs">146.37</text>
<text x="464.4" y="59.2" fill="#c9c9c9" stroke="#c9c9c9" stroke-width="0.3" font-size="15.5" textLength="8.3" lengthAdjust="spacingAndGlyphs">C</text>
<text x="474" y="59.2" fill="#f23645" stroke="#f23645" stroke-width="0.3" font-size="15.5" textLength="42.8" lengthAdjust="spacingAndGlyphs">146.41</text>
<text x="527.8" y="59.2" fill="#f23645" stroke="#f23645" stroke-width="0.3" font-size="15.5" textLength="97.3" lengthAdjust="spacingAndGlyphs">−0.67 (−0.46%)</text>
<text x="23.4" y="500.3" fill="#c9c9c9" stroke="#c9c9c9" stroke-width="0.3" font-size="15.5" textLength="237.8" lengthAdjust="spacingAndGlyphs">RSI Divergence Indicator (14, close)</text>
<text x="271.9" y="500.3" fill="#2962ff" stroke="#2962ff" stroke-width="0.3" font-size="15.5" textLength="36" lengthAdjust="spacingAndGlyphs">56.10</text>
<ellipse cx="321.8" cy="495.5" rx="3.3" ry="4.6" fill="none" stroke="#c8c8c8" stroke-width="1.15"/>
<line x1="318.3" y1="500.5" x2="325.3" y2="490.5" stroke="#c8c8c8" stroke-width="1.15"/>
<ellipse cx="340.6" cy="495.5" rx="3.3" ry="4.6" fill="none" stroke="#c8c8c8" stroke-width="1.15"/>
<line x1="337.1" y1="500.5" x2="344.1" y2="490.5" stroke="#c8c8c8" stroke-width="1.15"/>
<ellipse cx="359.40000000000003" cy="495.5" rx="3.3" ry="4.6" fill="none" stroke="#c8c8c8" stroke-width="1.15"/>
<line x1="355.90000000000003" y1="500.5" x2="362.90000000000003" y2="490.5" stroke="#c8c8c8" stroke-width="1.15"/>
<ellipse cx="378.5" cy="495.5" rx="3.3" ry="4.6" fill="none" stroke="#c8c8c8" stroke-width="1.15"/>
<line x1="375.0" y1="500.5" x2="382.0" y2="490.5" stroke="#c8c8c8" stroke-width="1.15"/>
<text x="23.4" y="628.8" fill="#c9c9c9" stroke="#c9c9c9" stroke-width="0.3" font-size="15.5" textLength="137.8" lengthAdjust="spacingAndGlyphs">MACD (12, 26, close)</text>
<text x="171.6" y="628.8" fill="#b2dfdb" stroke="#b2dfdb" stroke-width="0.3" font-size="15.5" textLength="28.1" lengthAdjust="spacingAndGlyphs">0.06</text>
<text x="208.8" y="628.8" fill="#2962ff" stroke="#2962ff" stroke-width="0.3" font-size="15.5" textLength="28.8" lengthAdjust="spacingAndGlyphs">0.48</text>
<text x="247.6" y="628.8" fill="#ff6d00" stroke="#ff6d00" stroke-width="0.3" font-size="15.5" textLength="28" lengthAdjust="spacingAndGlyphs">0.42</text>
<text x="1383" y="468.8" fill="#c4c4c4" stroke="#c4c4c4" stroke-width="0.15" font-size="15.5" textLength="44.5" lengthAdjust="spacingAndGlyphs">128.00</text>
<text x="1383" y="429.8" fill="#c4c4c4" stroke="#c4c4c4" stroke-width="0.15" font-size="15.5" textLength="44.5" lengthAdjust="spacingAndGlyphs">130.00</text>
<text x="1383" y="389.8" fill="#c4c4c4" stroke="#c4c4c4" stroke-width="0.15" font-size="15.5" textLength="44.5" lengthAdjust="spacingAndGlyphs">132.00</text>
<text x="1383" y="349.8" fill="#c4c4c4" stroke="#c4c4c4" stroke-width="0.15" font-size="15.5" textLength="44.5" lengthAdjust="spacingAndGlyphs">134.00</text>
<text x="1383" y="309.8" fill="#c4c4c4" stroke="#c4c4c4" stroke-width="0.15" font-size="15.5" textLength="44.5" lengthAdjust="spacingAndGlyphs">136.00</text>
<text x="1383" y="269.8" fill="#c4c4c4" stroke="#c4c4c4" stroke-width="0.15" font-size="15.5" textLength="44.5" lengthAdjust="spacingAndGlyphs">138.00</text>
<text x="1383" y="229.8" fill="#c4c4c4" stroke="#c4c4c4" stroke-width="0.15" font-size="15.5" textLength="44.5" lengthAdjust="spacingAndGlyphs">140.00</text>
<text x="1383" y="189.8" fill="#c4c4c4" stroke="#c4c4c4" stroke-width="0.15" font-size="15.5" textLength="44.5" lengthAdjust="spacingAndGlyphs">142.00</text>
<text x="1383" y="149.8" fill="#c4c4c4" stroke="#c4c4c4" stroke-width="0.15" font-size="15.5" textLength="44.5" lengthAdjust="spacingAndGlyphs">144.00</text>
<text x="1383" y="109.8" fill="#c4c4c4" stroke="#c4c4c4" stroke-width="0.15" font-size="15.5" textLength="44.5" lengthAdjust="spacingAndGlyphs">146.00</text>
<text x="1383" y="497.8" fill="#c4c4c4" stroke="#c4c4c4" stroke-width="0.15" font-size="15.5" textLength="36.5" lengthAdjust="spacingAndGlyphs">75.00</text>
<text x="1383" y="537.9" fill="#c4c4c4" stroke="#c4c4c4" stroke-width="0.15" font-size="15.5" textLength="36.5" lengthAdjust="spacingAndGlyphs">50.00</text>
<text x="1383" y="578.4" fill="#c4c4c4" stroke="#c4c4c4" stroke-width="0.15" font-size="15.5" textLength="36.5" lengthAdjust="spacingAndGlyphs">25.00</text>
<text x="1383" y="721.2" fill="#c4c4c4" stroke="#c4c4c4" stroke-width="0.15" font-size="15.5" textLength="37" lengthAdjust="spacingAndGlyphs">−2.00</text>
<rect x="1376" y="38.5" width="58.5" height="32.5" rx="5.5" fill="#0f0f0f" stroke="#333333" stroke-width="1.5"/>
<text x="1387" y="59.8" fill="#c9c9c9" stroke="#c9c9c9" stroke-width="0.3" font-size="15.5" textLength="26.4" lengthAdjust="spacingAndGlyphs">USD</text>
<path d="M1372,86 H1423.0 Q1425.5,86 1425.5,88.5 V104.2 Q1425.5,106.7 1423.0,106.7 H1372 Z" fill="#f23645"/>
<text x="1383" y="101.0" fill="#ffffff" stroke="#ffffff" stroke-width="0.3" font-size="15.5" textLength="37.8" lengthAdjust="spacingAndGlyphs">09:40</text>
<path d="M1372,513 H1423.5 Q1426,513 1426,515.5 V531.5 Q1426,534 1423.5,534 H1372 Z" fill="#2962ff"/>
<text x="1383" y="529.3" fill="#ffffff" stroke="#ffffff" stroke-width="0.3" font-size="15.5" textLength="37" lengthAdjust="spacingAndGlyphs">56.10</text>
<path d="M1372,621 H1416.0 Q1418.5,621 1418.5,623.5 V642 Q1418.5,642 1418.5,642 H1372 Z" fill="#2962ff"/>
<text x="1383" y="636.3" fill="#ffffff" stroke="#ffffff" stroke-width="0.3" font-size="15.5" textLength="29" lengthAdjust="spacingAndGlyphs">0.48</text>
<path d="M1372,642 H1418.5 Q1418.5,642 1418.5,642 V663.3 Q1418.5,663.3 1418.5,663.3 H1372 Z" fill="#ff6d00"/>
<text x="1383" y="657.3" fill="#ffffff" stroke="#ffffff" stroke-width="0.3" font-size="15.5" textLength="29" lengthAdjust="spacingAndGlyphs">0.42</text>
<path d="M1372,663.3 H1418.5 Q1418.5,663.3 1418.5,663.3 V682.0 Q1418.5,684.5 1416.0,684.5 H1372 Z" fill="#b2dfdb"/>
<text x="1383" y="678.2" fill="#131722" stroke="#131722" stroke-width="0.3" font-size="15.5" textLength="29" lengthAdjust="spacingAndGlyphs">0.06</text>
<text x="98.6" y="752.2" fill="#c4c4c4" stroke="#c4c4c4" stroke-width="0.15" font-size="15.5" textLength="15.5" lengthAdjust="spacingAndGlyphs" text-anchor="middle">21</text>
<text x="349.6" y="752.2" fill="#c4c4c4" stroke="#c4c4c4" stroke-width="0.15" font-size="15.5" textLength="15.5" lengthAdjust="spacingAndGlyphs" text-anchor="middle">22</text>
<text x="600.7" y="752.2" fill="#c4c4c4" stroke="#c4c4c4" stroke-width="0.15" font-size="15.5" textLength="15.5" lengthAdjust="spacingAndGlyphs" text-anchor="middle">23</text>
<text x="851.8" y="752.2" fill="#c4c4c4" stroke="#c4c4c4" stroke-width="0.15" font-size="15.5" textLength="15.5" lengthAdjust="spacingAndGlyphs" text-anchor="middle">24</text>
<text x="1102.8" y="752.2" fill="#c4c4c4" stroke="#c4c4c4" stroke-width="0.15" font-size="15.5" textLength="15.5" lengthAdjust="spacingAndGlyphs" text-anchor="middle">25</text>
<text x="1353.8" y="752.2" fill="#c4c4c4" stroke="#c4c4c4" stroke-width="0.15" font-size="15.5" textLength="15.5" lengthAdjust="spacingAndGlyphs" text-anchor="middle">26</text>
<g fill="#dbdbdb">
<path d="M12.9,780.8 H22.9 V793.2 H17.5 V785.4 H12.9 Z"/>
<circle cx="26.8" cy="783.4" r="2.5"/>
<path d="M30.6,780.8 H37.3 L34,793.2 H26.7 Z"/>
</g>
<text x="41.7" y="793.2" fill="#dbdbdb" stroke="#dbdbdb" stroke-width="0.3" font-size="15.3" textLength="87.8" lengthAdjust="spacingAndGlyphs">TradingView</text>
</svg>
</body></html>
